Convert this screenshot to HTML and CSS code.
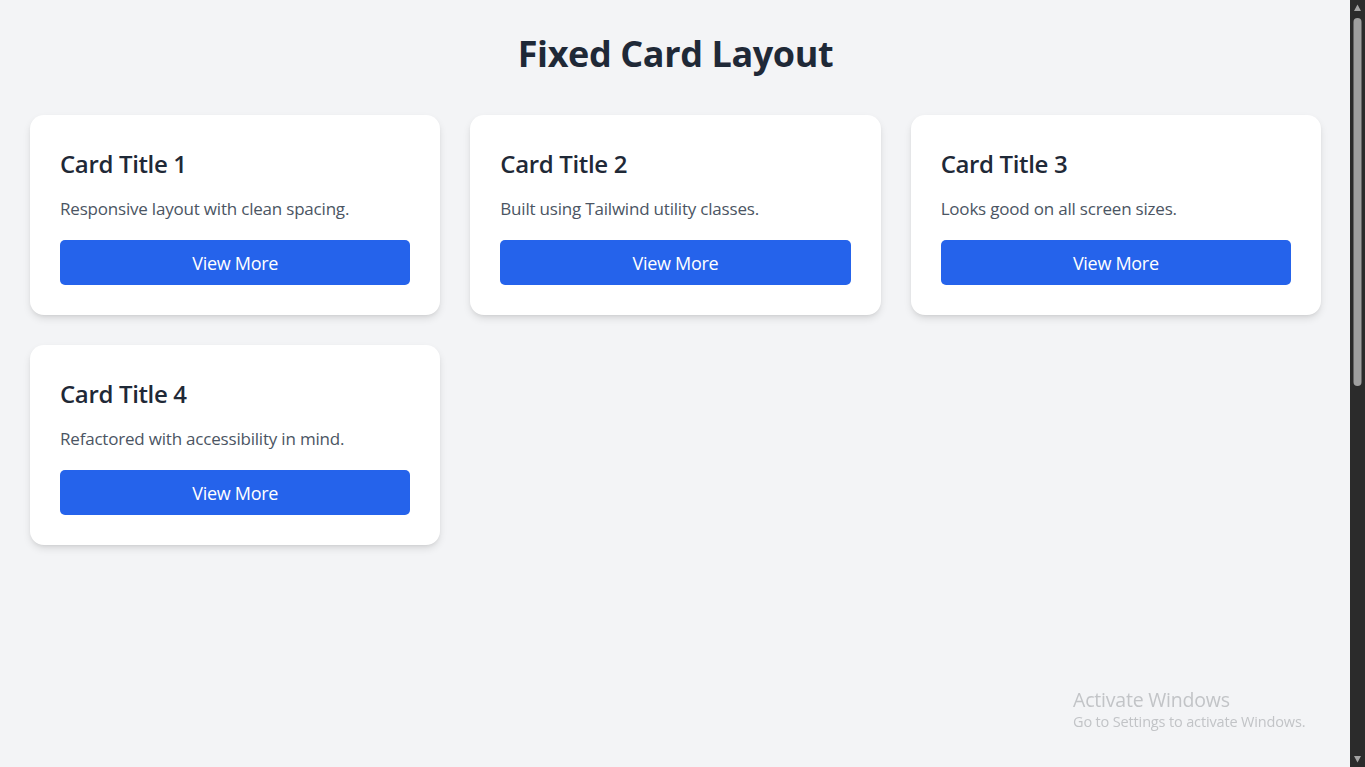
FILE: index.html
```html
<!DOCTYPE html>
<html lang="en">
<head>
<meta charset="utf-8">
<title>Fixed Card Layout</title>
<link rel="stylesheet" href="styles.css">
</head>
<body>
<div class="frame">
  <main class="page">
    <h1 class="page-title">Fixed Card Layout</h1>
    <div class="grid">
      <article class="card">
        <h2 class="card-title">Card Title 1</h2>
        <p class="card-text">Responsive layout with clean spacing.</p>
        <button class="btn" type="button">View More</button>
      </article>
      <article class="card">
        <h2 class="card-title">Card Title 2</h2>
        <p class="card-text">Built using Tailwind utility classes.</p>
        <button class="btn" type="button">View More</button>
      </article>
      <article class="card">
        <h2 class="card-title">Card Title 3</h2>
        <p class="card-text">Looks good on all screen sizes.</p>
        <button class="btn" type="button">View More</button>
      </article>
      <article class="card">
        <h2 class="card-title">Card Title 4</h2>
        <p class="card-text">Refactored with accessibility in mind.</p>
        <button class="btn" type="button">View More</button>
      </article>
    </div>
  </main>
  <div class="scrollbar" aria-hidden="true">
    <svg class="scroll-svg" width="15" height="767" viewBox="0 0 15 767">
      <rect x="0" y="0" width="15" height="767" fill="#2b2b2b"/>
      <path d="M4 11 L7.5 4.5 L11 11 Z" fill="#a3a3a3"/>
      <rect x="3.5" y="18" width="8" height="368" rx="4" fill="#9f9f9f"/>
      <path d="M4 756 L11 756 L7.5 762.5 Z" fill="#a3a3a3"/>
    </svg>
  </div>
</div>
<div class="watermark">
  <div class="wm-title">Activate Windows</div>
  <div class="wm-sub">Go to Settings to activate Windows.</div>
</div>
</body>
</html>
```

FILE: styles.css
```css
* { box-sizing: border-box; }

html, body {
  margin: 0;
  padding: 0;
  height: 100%;
  overflow: hidden;
}

body {
  background: #f3f4f6;
  font-family: "Open Sans", "Noto Sans", "Liberation Sans", sans-serif;
  color: #1f2937;
}

.frame {
  display: flex;
  height: 100vh;
}

.page {
  flex: 1;
  padding: 34px 29px 30px 30px;
}

.page-title {
  margin: 0 0 41px;
  text-align: center;
  font-size: 36px;
  line-height: 40px;
  font-weight: 700;
  letter-spacing: -0.4px;
  color: #1f2937;
}

.grid {
  display: grid;
  grid-template-columns: repeat(3, 1fr);
  gap: 30px;
}

.card {
  background: #ffffff;
  border-radius: 14px;
  padding: 33px 30px 30px;
  box-shadow: 0 4px 8px -1px rgba(0,0,0,0.12), 0 2px 4px -2px rgba(0,0,0,0.1);
  display: flex;
  flex-direction: column;
}

.card-title {
  margin: 0 0 15px;
  font-size: 24px;
  line-height: 32px;
  font-weight: 600;
  letter-spacing: -0.35px;
  color: #1f2937;
}

.card-text {
  margin: 0 0 17px;
  font-size: 17px;
  line-height: 28px;
  color: #4b5563;
  letter-spacing: -0.2px;
}

.btn {
  height: 45px;
  border: 0;
  border-radius: 5px;
  background: #2563eb;
  color: #ffffff;
  font-family: inherit;
  font-size: 18px;
  letter-spacing: -0.3px;
  cursor: pointer;
}

.scrollbar {
  width: 15px;
  height: 100vh;
  flex: none;
  background: #2b2b2b;
}

.scroll-svg { display: block; }

.watermark {
  position: fixed;
  left: 1073px;
  top: 688px;
  color: #c2c4c7;
  font-family: "Open Sans", "Noto Sans", sans-serif;
  pointer-events: none;
}

.wm-title {
  font-size: 19.5px;
  line-height: 24px;
  letter-spacing: -0.2px;
}

.wm-sub {
  font-size: 14.5px;
  line-height: 20px;
  letter-spacing: -0.15px;
}
```
